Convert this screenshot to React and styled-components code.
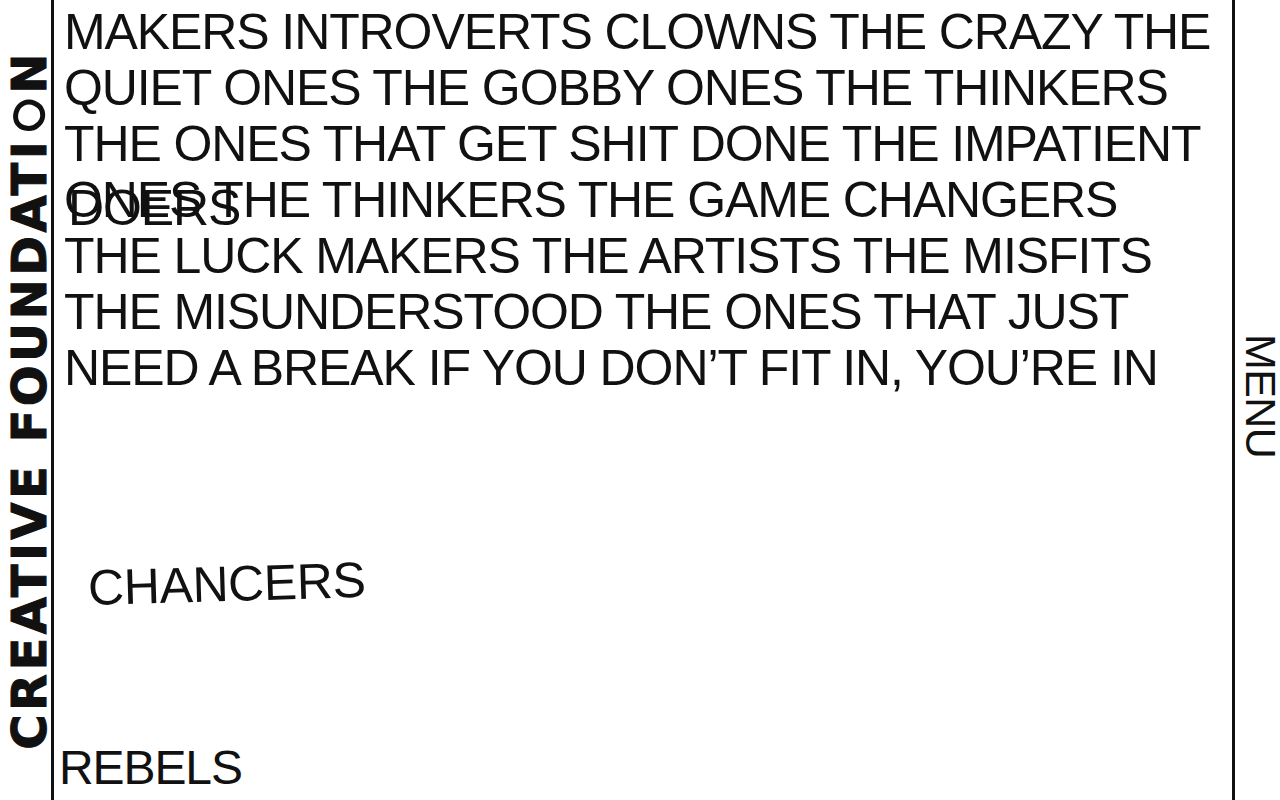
import React from 'react'

// Components
import styled, { createGlobalStyle } from 'styled-components'

const GlobalStyle = createGlobalStyle`
  html, body {
    margin: 0;
    padding: 0;
    background: #fff;
  }
  body {
    font-family: "Liberation Sans", Arial, sans-serif;
    color: #111;
  }
`

const Page = styled.div`
  display: grid;
  grid-template-columns: 51px 1fr 45px;
  height: 100vh;
  overflow: hidden;
  background: #fff;
`

const Side = styled.aside`
  display: flex;
  align-items: center;
  justify-content: flex-start;
  overflow: visible;
`

const Brand = styled.h1`
  margin: 0 0 0 5px;
  writing-mode: vertical-rl;
  transform: rotate(180deg);
  font-family: "DejaVu Sans", sans-serif;
  font-weight: 700;
  font-size: 48px;
  line-height: 1;
  letter-spacing: 3.5px;
  white-space: nowrap;
  color: #111;
  -webkit-text-stroke: 1px #111;
`

const ScribbleO = styled.span`
  position: relative;
  color: transparent;
  -webkit-text-fill-color: transparent;
  -webkit-text-stroke-width: 0;
  -webkit-text-stroke-color: transparent;

  svg {
    position: absolute;
    top: 50%;
    left: 50%;
    width: 35px;
    height: 35px;
    transform: translate(-50%, -50%);
  }
`

const Main = styled.main`
  position: relative;
  border-left: 3px solid #111;
  border-right: 3px solid #111;
  padding: 4px 0 0 10px;
  overflow: hidden;
`

const Manifesto = styled.p`
  margin: 0;
  font-size: 50px;
  line-height: 56px;
  letter-spacing: -1.1px;
  text-transform: uppercase;
`

const Line = styled.span`
  display: block;
  white-space: nowrap;
`

const FloatWord = styled.span`
  position: absolute;
  top: ${props => props.top}px;
  left: ${props => props.left}px;
  font-size: ${props => props.size || 50}px;
  line-height: 56px;
  letter-spacing: ${props => props.spacing ?? -1.1}px;
  white-space: nowrap;
  transform: rotate(${props => props.tilt || 0}deg);
  transform-origin: center;
`

const MenuCol = styled.nav`
  display: flex;
  align-items: center;
  justify-content: center;
`

const MenuLabel = styled.a`
  writing-mode: vertical-rl;
  font-size: 43px;
  line-height: 0.8;
  letter-spacing: -0.6px;
  color: #111;
  text-decoration: none;
  cursor: pointer;
  margin: 0 0 8px 6px;
`

const lines = [
  'MAKERS INTROVERTS CLOWNS THE CRAZY THE',
  'QUIET ONES THE GOBBY ONES THE THINKERS',
  'THE ONES THAT GET SHIT DONE THE IMPATIENT',
  'ONES THE THINKERS THE GAME CHANGERS',
  'THE LUCK MAKERS THE ARTISTS THE MISFITS',
  'THE MISUNDERSTOOD THE ONES THAT JUST',
  'NEED A BREAK IF YOU DON\u2019T FIT IN, YOU\u2019RE IN',
]

const words = [
  { text: 'DOERS', top: 180, left: 14 },
  { text: 'CHANCERS', top: 556, left: 34, tilt: -1.7, spacing: -0.4 },
  { text: 'REBELS', top: 740, left: 5, size: 48 },
]

const Scribble = () => (
  <svg viewBox="0 0 35 35" aria-hidden="true">
    <path
      d="M9.5 7.5 C14.5 3.5 24.5 3.8 29 10 C33 16.5 30.5 26.5 23 30 C16 33 6.5 29.5 4.3 22 C2.5 15.5 5.5 9.5 12 6"
      fill="none"
      stroke="#111"
      strokeWidth="5"
      strokeLinecap="round"
    />
    <path
      d="M6 11.5 C10 5 19.5 2.5 26.5 6.5"
      fill="none"
      stroke="#111"
      strokeWidth="3.2"
      strokeLinecap="round"
    />
  </svg>
)

export default function App() {
  return (
    <>
      <GlobalStyle />
      <Page>
        <Side>
          <Brand>
            CREATIVE FOUNDATI
            <ScribbleO>
              O
              <Scribble />
            </ScribbleO>
            N
          </Brand>
        </Side>
        <Main>
          <Manifesto>
            {lines.map(line => (
              <Line key={line}>{line}</Line>
            ))}
          </Manifesto>
          {words.map(w => (
            <FloatWord
              key={w.text}
              top={w.top}
              left={w.left}
              size={w.size}
              tilt={w.tilt}
              spacing={w.spacing}
            >
              {w.text}
            </FloatWord>
          ))}
        </Main>
        <MenuCol>
          <MenuLabel>MENU</MenuLabel>
        </MenuCol>
      </Page>
    </>
  )
}
